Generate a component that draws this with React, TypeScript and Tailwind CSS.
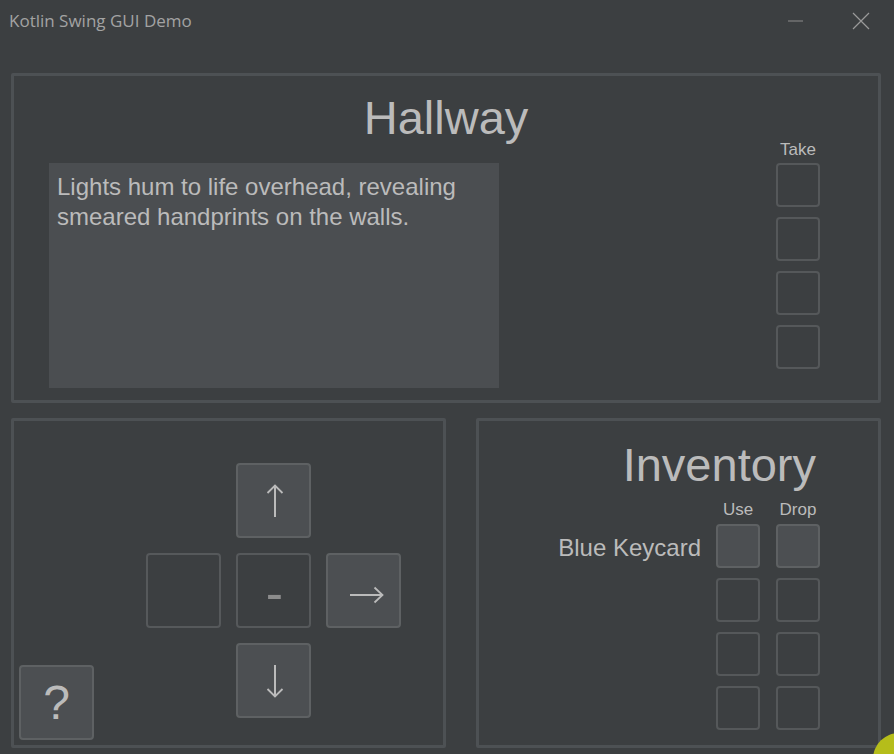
import React from 'react';

const panel = 'border-[3px] border-[#4d5154] rounded-[2px]';
const box = 'w-[44px] h-[44px] rounded-[4px] border-2 border-[#55585a]';
const boxOn = 'w-[44px] h-[44px] rounded-[4px] border-2 border-[#5e6163] bg-[#4c4f52]';
const navOff = 'w-[75px] h-[75px] rounded-[4px] border-2 border-[#56595b] flex items-center justify-center';
const navOn = 'w-[75px] h-[75px] rounded-[4px] border-2 border-[#5e6163] bg-[#4c4f52] flex items-center justify-center';

function UpArrow() {
  return (
    <svg width="18" height="34" viewBox="0 0 18 34" className="ml-[3px]">
      <path d="M9 1.5 V33" stroke="#bbbbbb" strokeWidth="2" fill="none" />
      <path d="M1.5 9 L9 1.5 L16.5 9" stroke="#bbbbbb" strokeWidth="1.8" fill="none" />
    </svg>
  );
}

function DownArrow() {
  return (
    <svg width="18" height="34" viewBox="0 0 18 34" className="ml-[3px]">
      <path d="M9 1 V32.5" stroke="#bbbbbb" strokeWidth="2" fill="none" />
      <path d="M1.5 25 L9 32.5 L16.5 25" stroke="#bbbbbb" strokeWidth="1.8" fill="none" />
    </svg>
  );
}

function RightArrow() {
  return (
    <svg width="35" height="18" viewBox="0 0 35 18" className="ml-[6px] mt-[8px]">
      <path d="M1 9 H33.5" stroke="#bbbbbb" strokeWidth="2" fill="none" />
      <path d="M25.5 1.5 L33.5 9 L25.5 16.5" stroke="#bbbbbb" strokeWidth="1.8" fill="none" />
    </svg>
  );
}

export default function App() {
  return (
    <div
      className="relative w-[894px] h-[754px] overflow-hidden bg-[#3c3f41] text-[#bbbbbb]"
      style={{ fontFamily: '"Liberation Sans", Arial, sans-serif' }}
    >
      {/* title bar */}
      <div className="flex items-center h-[42px] pl-[9px]">
        <span className="text-[17px] text-[#a3a3a3]" style={{ fontFamily: '"Open Sans", sans-serif' }}>
          Kotlin Swing GUI Demo
        </span>
        <div className="ml-auto flex items-center mr-[24px]">
          <svg width="15" height="2" viewBox="0 0 15 2">
            <path d="M0 1 H15" stroke="#8c8c8c" strokeWidth="1" />
          </svg>
          <svg width="18" height="18" viewBox="0 0 18 18" className="ml-[49px]">
            <path d="M1 1 L17 17 M17 1 L1 17" stroke="#9a9a9a" strokeWidth="1.2" fill="none" />
          </svg>
        </div>
      </div>

      <div className="flex flex-col gap-[15px] pl-[11px] pr-[13px] pt-[31px]">
        {/* room panel */}
        <div className={`${panel} h-[330px] flex flex-col`}>
          <h1 className="text-[47px] leading-none text-center mt-[18px]">Hallway</h1>
          <div className="flex justify-between items-start pl-[35px] pr-[58px]">
            <div className="w-[450px] h-[225px] mt-[22px] bg-[#4b4e51] px-[8px] pt-[9px] text-[24px] leading-[30px]">
              Lights hum to life overhead, revealing smeared handprints on the walls.
            </div>
            <div className="w-[44px] flex flex-col items-center gap-[10px]">
              <div className="text-[17px] leading-none h-[17px] -mb-[5px]">Take</div>
              <div className={box} />
              <div className={box} />
              <div className={box} />
              <div className={box} />
            </div>
          </div>
        </div>

        <div className="flex gap-[30px] h-[330px]">
          {/* navigation */}
          <div className={`${panel} w-[435px] flex pl-[5px] pb-[5px]`}>
            <div className="flex flex-col justify-end">
              <button className={`${navOn} text-[48px] leading-none text-[#bbbbbb]`}>?</button>
            </div>
            <div className="ml-[52px] mt-[42px] self-start grid grid-cols-[75px_75px_75px] gap-[15px]">
              <div />
              <button className={navOn}>
                <UpArrow />
              </button>
              <div />
              <button className={navOff} />
              <button className={`${navOff} text-[52px] leading-none text-[#8c8c8c]`}>
                <span className="mt-[4px] ml-[2px]">-</span>
              </button>
              <button className={navOn}>
                <RightArrow />
              </button>
              <div />
              <button className={navOn}>
                <DownArrow />
              </button>
              <div />
            </div>
          </div>

          {/* inventory */}
          <div className={`${panel} flex-1 flex flex-col items-end pr-[58px]`}>
            <h2 className="text-[47px] leading-none mt-[20px] mr-[4px]">Inventory</h2>
            <div className="flex gap-[16px] mt-[13px]">
              <div className="w-[44px] text-center text-[17px] leading-none h-[17px]">Use</div>
              <div className="w-[44px] text-center text-[17px] leading-none h-[17px]">Drop</div>
            </div>
            <div className="flex flex-col items-end gap-[10px] mt-[6px]">
              <div className="flex items-center">
                <span className="text-[24px] leading-none pt-[3px] mr-[15px]">Blue Keycard</span>
                <div className={boxOn} />
                <div className={`${boxOn} ml-[16px]`} />
              </div>
              {[0, 1, 2].map((i) => (
                <div key={i} className="flex gap-[16px]">
                  <div className={box} />
                  <div className={box} />
                </div>
              ))}
            </div>
          </div>
        </div>
      </div>

      <div className="absolute left-[873px] top-[733px] w-[52px] h-[52px] rounded-full bg-[#b5bd1a]" />
    </div>
  );
}
